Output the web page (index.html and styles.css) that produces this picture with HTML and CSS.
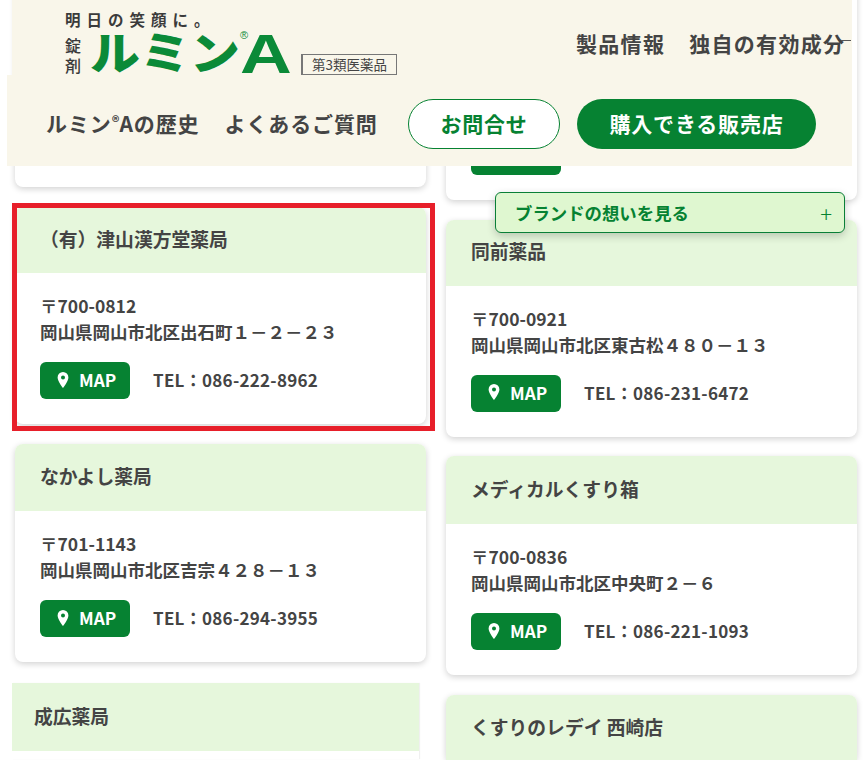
FILE: index.html
```html
<!DOCTYPE html>
<html lang="ja">
<head>
<meta charset="utf-8">
<title>ルミンA 販売店</title>
<link rel="stylesheet" href="styles.css">
</head>
<body>
<div class="page">
  <main class="columns">
    <section class="col col-left">
      <div class="stub stub-left"></div>
      <article class="card card-h66 is-marked">
        <h3 class="card-title">（有）津山漢方堂薬局</h3>
        <div class="card-body">
          <p class="addr">〒700-0812<br>岡山県岡山市北区出石町１－２－２３</p>
          <div class="contact">
            <a class="map-btn"><svg class="pin" viewBox="0 0 12 16"><path fill-rule="evenodd" d="M6 0a5.4 5.4 0 0 0-5.4 5.4C.6 9.2 6 16 6 16s5.400-6.800 5.400-10.600A5.400 5.400 0 0 0 6 0zm0 7.400a2 2 0 1 1 0-4 2 2 0 0 1 0 4z"/></svg><span class="map-label">MAP</span></a>
            <span class="tel">TEL：086-222-8962</span>
          </div>
        </div>
      </article>
      <article class="card card-h67">
        <h3 class="card-title">なかよし薬局</h3>
        <div class="card-body">
          <p class="addr">〒701-1143<br>岡山県岡山市北区吉宗４２８－１３</p>
          <div class="contact">
            <a class="map-btn"><svg class="pin" viewBox="0 0 12 16"><path fill-rule="evenodd" d="M6 0a5.4 5.4 0 0 0-5.4 5.4C.6 9.2 6 16 6 16s5.400-6.800 5.400-10.600A5.400 5.400 0 0 0 6 0zm0 7.400a2 2 0 1 1 0-4 2 2 0 0 1 0 4z"/></svg><span class="map-label">MAP</span></a>
            <span class="tel">TEL：086-294-3955</span>
          </div>
        </div>
      </article>
      <article class="card card-h68 card-shifted">
        <h3 class="card-title">成広薬局</h3>
      </article>
    </section>
    <section class="col col-right">
      <div class="stub stub-right"><span class="stub-btn"></span></div>
      <article class="card card-h66">
        <h3 class="card-title">同前薬品</h3>
        <div class="card-body">
          <p class="addr">〒700-0921<br>岡山県岡山市北区東古松４８０－１３</p>
          <div class="contact">
            <a class="map-btn"><svg class="pin" viewBox="0 0 12 16"><path fill-rule="evenodd" d="M6 0a5.4 5.4 0 0 0-5.4 5.4C.6 9.2 6 16 6 16s5.400-6.800 5.400-10.600A5.400 5.400 0 0 0 6 0zm0 7.400a2 2 0 1 1 0-4 2 2 0 0 1 0 4z"/></svg><span class="map-label">MAP</span></a>
            <span class="tel">TEL：086-231-6472</span>
          </div>
        </div>
      </article>
      <article class="card card-h68">
        <h3 class="card-title">メディカルくすり箱</h3>
        <div class="card-body">
          <p class="addr">〒700-0836<br>岡山県岡山市北区中央町２－６</p>
          <div class="contact">
            <a class="map-btn"><svg class="pin" viewBox="0 0 12 16"><path fill-rule="evenodd" d="M6 0a5.4 5.4 0 0 0-5.4 5.4C.6 9.2 6 16 6 16s5.400-6.800 5.400-10.600A5.400 5.400 0 0 0 6 0zm0 7.400a2 2 0 1 1 0-4 2 2 0 0 1 0 4z"/></svg><span class="map-label">MAP</span></a>
            <span class="tel">TEL：086-221-1093</span>
          </div>
        </div>
      </article>
      <article class="card card-h67">
        <h3 class="card-title">くすりのレデイ 西崎店</h3>
      </article>
    </section>
  </main>

  <header class="site-header">
    <div class="head-top">
      <div class="logo">
        <p class="tagline">明日の笑顔に。</p>
        <div class="logo-row">
          <span class="form">錠<br>剤</span>
          <span class="brand">ルミン</span>
          <span class="brand-a"><span class="reg">®</span><span class="a-glyph">A</span></span>
          <span class="badge">第3類医薬品</span>
        </div>
      </div>
      <nav class="nav nav-top">
        <a>製品情報</a>
        <a class="nav-cut">独自の有効成分</a>
      </nav>
    </div>
    <div class="head-bottom">
      <nav class="nav nav-bottom">
        <a>ルミン<span class="nav-reg">®</span>Aの歴史</a>
        <a>よくあるご質問</a>
      </nav>
      <a class="pill pill-outline">お問合せ</a>
      <a class="pill pill-solid">購入できる販売店</a>
    </div>
  </header>

  <a class="brand-bar"><span>ブランドの想いを見る</span><span class="plus">+</span></a>
</div>
</body>
</html>
```
FILE: styles.css
```css
* { box-sizing: border-box; }
html, body { margin: 0; padding: 0; background: #fff; }
body {
  font-family: "Noto Sans CJK JP", "Noto Sans", sans-serif;
  color: #3b3b3b;
  overflow: hidden;
}
.page { position: relative; width: 866px; height: 769px; overflow: hidden; }

/* store columns */
.columns { display: flex; height: 760px; overflow: hidden; padding-left: 15px; gap: 20px; }
.col { width: 411px; flex: none; display: flex; flex-direction: column; }
.col-left { margin-top: -30px; gap: 20px; }
.col-right { margin-top: -17px; gap: 19.5px; }

.stub, .card {
  background: #fff;
  border-radius: 8px;
  box-shadow: 0 2px 6px rgba(0, 0, 0, .18);
  flex: none;
}
.stub { height: 217px; position: relative; display: flex; align-items: flex-end; padding: 0 0 25px 25px; }
.stub-btn { width: 90px; height: 37px; border-radius: 6px; background: #068232; }

.card { position: relative; }
.card-title {
  margin: 0;
  display: flex;
  align-items: center;
  padding: 0 0 4px 25px;
  background: #e6f7dc;
  border-radius: 8px 8px 0 0;
  font-size: 18.800px;
  font-weight: 700;
  color: #444;
}
.card-h66 .card-title { height: 66px; }
.card-h67 .card-title { height: 67px; }
.card-h68 .card-title { height: 68px; }
.card-shifted { margin: 1px 7px 0 -3px; height: 76px; box-shadow: 1px 0 1px rgba(0, 0, 0, .06); border-radius: 0; }
.card-shifted .card-title { padding-left: 22px; border-radius: 0; }

.is-marked::after {
  content: "";
  position: absolute;
  inset: -4px -9px -7px -3px;
  border: 5px solid #e71f2a;
  pointer-events: none;
}

.card-body { padding: 20px 25px 25px; }
.addr { margin: 0; font-size: 17.500px; line-height: 26px; font-weight: 700; color: #444; }
.contact { display: flex; align-items: center; gap: 23px; margin-top: 17px; }
.map-btn {
  width: 90px;
  height: 37px;
  display: flex;
  align-items: center;
  padding-left: 17px;
  gap: 10px;
  border-radius: 6px;
  background: #068232;
  color: #fff;
  font-size: 17.200px;
  font-weight: 700;
}
.map-label { line-height: 33px; height: 35px; }
.pin { width: 12px; height: 16px; fill: #fff; flex: none; margin-bottom: 2px; }
.tel { font-size: 17px; font-weight: 700; letter-spacing: .27px; margin-top: -2px; color: #444; }

/* fixed header */
.site-header { position: absolute; left: 7px; top: 0; width: 845px; }
.head-top {
  margin-left: 5px;
  height: 75px;
  background: #f9f6ea;
  display: flex;
  justify-content: space-between;
}
.logo { padding: 9px 0 0 53px; width: 564px; flex: none; }
.tagline { margin: 0; font-size: 15.500px; line-height: 20px; font-weight: 700; letter-spacing: 6px; color: #3b3b3b; }
.logo-row { display: flex; align-items: flex-end; height: 46px; }
.form { font-size: 16px; line-height: 20px; font-weight: 500; width: 25px; color: #3b3b3b; flex: none; }
.brand {
  width: 150px;
  height: 46px;
  flex: none;
  font-size: 45px;
  line-height: 44px;
  font-weight: 900;
  color: #0b8a38;
  white-space: nowrap;
  transform: scaleX(1.11);
  transform-origin: 0 50%;
}
.brand-a {
  position: relative;
  display: block;
  height: 46px;
  width: 61px;
  flex: none;
  font-family: "Liberation Sans", Arial, sans-serif;
  font-weight: 700;
  color: #0b8a38;
}
.a-glyph {
  display: block;
  font-size: 56px;
  line-height: 56px;
  margin: -3px 0 0 0;
  transform: scaleX(1.28);
  transform-origin: 0 50%;
}
.reg { position: absolute; left: 0; top: 0; font-size: 11px; line-height: 12px; font-weight: 400; }
.badge {
  width: 96px;
  height: 21px;
  flex: none;
  border: 1px solid #777;
  border-left-width: 2px;
  font-size: 13.500px;
  line-height: 18px;
  text-align: center;
  color: #444;
  white-space: nowrap;
}
.nav { display: flex; font-weight: 700; color: #444; white-space: nowrap; }
.nav-top { padding-top: 29px; gap: 24px; font-size: 21px; line-height: 28px; letter-spacing: 1.300px; flex: none; width: 276px; }
.nav-cut { position: relative; }
.nav-cut::after {
  content: "";
  position: absolute;
  right: -6px;
  top: 11px;
  width: 10px;
  height: 1px;
  background: #555;
}
.head-bottom { height: 91px; background: #f9f6ea; display: flex; align-items: flex-start; padding: 24px 0 0 39px; }
.nav-bottom { width: 362px; gap: 25px; font-size: 21px; line-height: 48px; letter-spacing: .9px; }
.nav-reg { font-size: 15px; letter-spacing: 0; vertical-align: 4px; line-height: 1; }
.pill {
  height: 50px;
  display: flex;
  align-items: center;
  justify-content: center;
  padding-bottom: 2px;
  border-radius: 25px;
  font-size: 21px;
  font-weight: 700;
  letter-spacing: .8px;
  white-space: nowrap;
}
.pill-outline { width: 152px; background: #fff; border: 1px solid #068232; color: #068232; }
.pill-solid { width: 239px; margin-left: 17px; background: #068232; color: #fff; }

/* floating bar */
.brand-bar {
  position: absolute;
  left: 495px;
  top: 192px;
  width: 350px;
  height: 41px;
  display: flex;
  align-items: center;
  justify-content: space-between;
  padding: 0 12px 0 19px;
  background: #dff7d0;
  border: 1px solid #0a7f37;
  border-radius: 6px;
  box-shadow: 0 3px 8px rgba(0, 0, 0, .2);
  color: #068232;
  font-size: 17.400px;
  font-weight: 700;
}
.plus { font-size: 22px; font-weight: 300; line-height: 24px; }
```
